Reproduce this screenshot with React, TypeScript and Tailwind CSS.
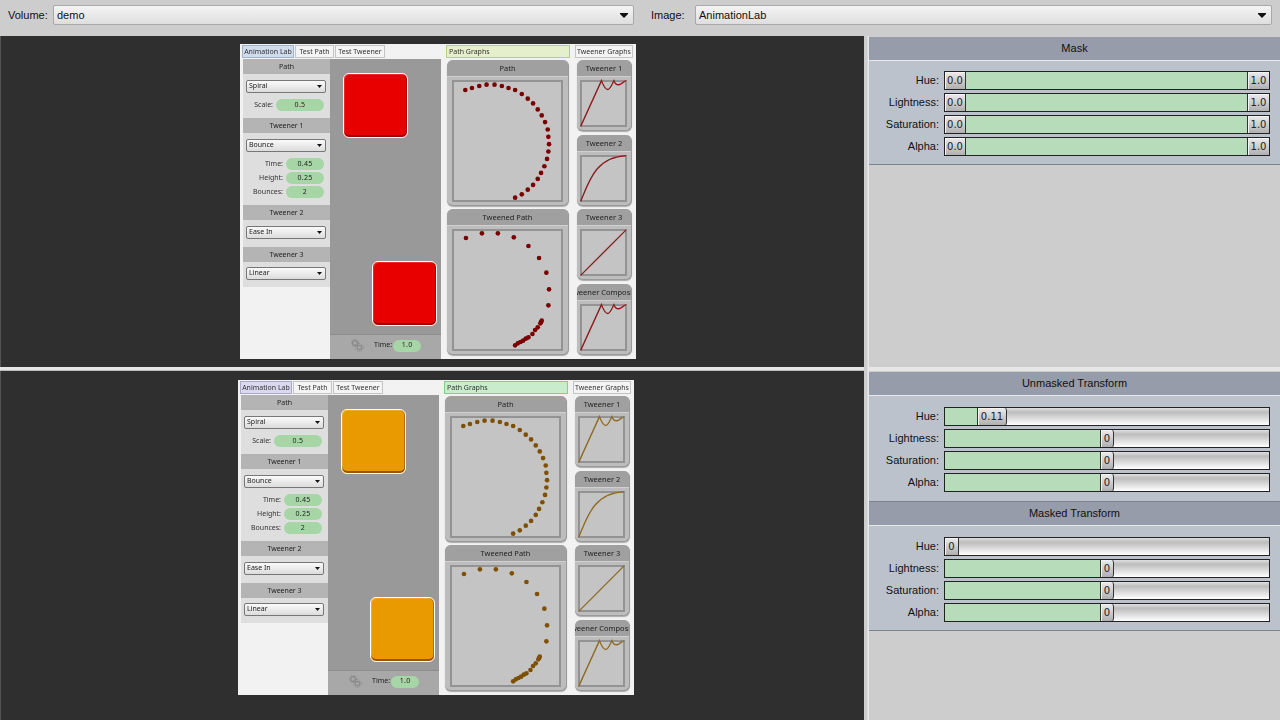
import React from 'react';

const F = 'font-["Liberation_Sans",Arial,sans-serif]';
const N = 'font-["Noto_Sans",Arial,sans-serif]';

const pathDots = [
  [76, 150], [96, 144], [118, 138], [140, 134], [164, 134], [186, 138], [206, 144], [226, 150], [246, 162],
  [264, 176], [280, 190], [294, 208], [306, 226], [316, 246], [324, 268], [326, 290], [328, 312], [326, 334],
  [322, 356], [314, 378], [304, 398], [294, 416], [280, 434], [264, 448], [246, 462], [226, 472],
];

const tweenedDots = [
  [78, 102], [126, 88], [174, 88], [222, 100], [266, 126], [298, 162], [320, 206], [328, 256], [326, 304],
  [306, 350], [304, 354], [302, 358], [294, 370], [286, 378], [278, 390], [266, 400], [258, 404], [250, 410],
  [242, 414], [234, 418], [226, 424],
];

const bounce = 'M424 258 L486 124 C492 140 498 150 505 150 C512 150 518 134 523 124 C527 134 532 137 538 136 C546 135 552 126 560 124';

const Arrow = () => (
  <svg width="8" height="5" viewBox="0 0 8 5" className="shrink-0">
    <path d="M0 0H8V1L4 5L0 1Z" fill="#111" />
  </svg>
);

const Select = ({ label }: { label: string }) => (
  <div className="flex-1 h-5 flex items-center justify-between pl-[3px] pr-[5px] border border-[#a8a8a8] rounded-[2px] bg-gradient-to-b from-[#f4f4f4] to-[#dedede] text-[11px] text-[#111]">
    <span>{label}</span>
    <Arrow />
  </div>
);

const Tab = ({ label, w, tint, left }: { label: string; w: string; tint?: string; left?: boolean }) => (
  <div className={`${w} ${tint ?? 'bg-[#f4f4f4] border-[#c4c4c4]'} ${left ? 'justify-start pl-[2px]' : 'justify-center'} h-[13px] mt-[1px] mr-[1px] pt-[1px] border flex items-center text-[7px] text-[#333] whitespace-nowrap`}>
    {label}
  </div>
);

const SideHead = ({ label }: { label: string }) => (
  <div className="h-[15px] pt-[2px] bg-[#b4b4b4] flex items-center justify-center text-[7px] text-[#222]">{label}</div>
);

const MiniSelect = ({ label }: { label: string }) => (
  <div className="ml-[3px] mr-[4px] h-[13px] flex items-center justify-between px-[2px] border border-[#777] rounded-[2px] bg-gradient-to-b from-[#fafafa] to-[#dcdcdc] text-[7px] text-[#222]">
    <span>{label}</span>
    <svg width="5" height="3" viewBox="0 0 5 3" className="mr-[1px]"><path d="M0 0H5L2.5 3Z" fill="#111" /></svg>
  </div>
);

const Param = ({ label, value, w }: { label: string; value: string; w: string }) => (
  <div className="h-[14px] flex items-center justify-end pr-[6px] gap-[3px] text-[7px] text-[#333]">
    <span>{label}</span>
    <div className={`${w} h-[12px] rounded-full bg-[#a6d6a6] flex items-center justify-center text-[#222] tracking-[0.3px]`}>{value}</div>
  </div>
);

const Square = ({ color, className }: { color: string; className: string }) => (
  <div className={`${className} ${color} w-[65px] h-[65px] rounded-[6px] border border-white shadow-[inset_0_-2px_0_rgba(60,0,0,0.45),inset_-1px_0_0_rgba(60,0,0,0.3),inset_1px_1px_0_rgba(255,255,255,0.15)]`} />
);

const Gears = () => (
  <svg width="13" height="13" viewBox="0 0 13 13" fill="none" stroke="#8a8a8a">
    <circle cx="4" cy="4" r="2.4" strokeWidth="1.2" />
    <circle cx="4" cy="4" r="3.6" strokeWidth="1" strokeDasharray="1.2 1.2" />
    <circle cx="8.5" cy="8.5" r="2.2" fill="#a8a8a8" strokeWidth="1.2" />
    <circle cx="8.5" cy="8.5" r="3.8" strokeWidth="1" strokeDasharray="1.2 1.2" />
  </svg>
);

const Panel = ({ title, big, children }: { title: string; big?: boolean; children: React.ReactNode }) => (
  <div className={`${big ? 'w-[122px] h-[146px]' : 'w-[55px] h-[71px]'} shrink-0 flex flex-col rounded-[6px] overflow-hidden bg-[#bdbdbd] border-r border-b border-[#9a9a9a] shadow-[0_1px_1px_#aaa]`}>
    <div className="h-[17px] pt-[1px] shrink-0 bg-[#a0a0a0] border-b border-[#d0d0d0] flex justify-center items-center overflow-hidden text-[7.5px] text-[#222] whitespace-nowrap">
      {title}
    </div>
    <div className={`${big ? 'w-[111px] h-[122px] ml-[5px]' : 'w-[47px] h-[47px] ml-[3px]'} mt-[3px] border-2 border-[#939393] bg-[#c4c4c4]`}>
      {children}
    </div>
  </div>
);

const Dots = ({ dots, box, color }: { dots: number[][]; box: string; color: string }) => (
  <svg width="107" height="118" viewBox={box} preserveAspectRatio="none" className="block">
    {dots.map(([x, y], i) => (
      <circle key={i} cx={x} cy={y} r="7" fill={color} />
    ))}
  </svg>
);

const Curve = ({ d, dy, color }: { d: string; dy: number; color: string }) => (
  <svg width="43" height="43" viewBox={`428 ${128 + dy} 128 126`} preserveAspectRatio="none" className="block overflow-visible">
    <path d={d} fill="none" stroke={color} strokeWidth="4" />
  </svg>
);

const LabWindow = ({ square, dot, line, firstTab, graphTab, className }: {
  square: string; dot: string; line: string; firstTab: string; graphTab: string; className: string;
}) => (
  <div className={`${className} ${N} w-[396px] h-[315px] bg-[#f2f2f2] flex flex-col blur-[0.3px]`}>
    <div className="h-[15px] shrink-0 flex pl-[2px]">
      <Tab label="Animation Lab" w="w-[52px]" tint={firstTab} />
      <Tab label="Test Path" w="w-[39px]" />
      <Tab label="Test Tweener" w="w-[50px]" />
      <div className="w-[60px]" />
      <Tab label="Path Graphs" w="w-[124px]" tint={graphTab} left />
      <div className="w-[4px]" />
      <Tab label="Tweener Graphs" w="w-[58px]" />
    </div>
    <div className="flex-1 flex min-h-0">
      <div className="w-[87px] ml-[3px] shrink-0 flex flex-col">
        <div className="bg-[#dedede] h-[59px]">
          <SideHead label="Path" />
          <div className="pt-[6px]"><MiniSelect label="Spiral" /></div>
          <div className="mt-[5px]"><Param label="Scale:" value="0.5" w="w-[48px]" /></div>
        </div>
        <div className="bg-[#dedede] h-[87px]">
          <SideHead label="Tweener 1" />
          <div className="pt-[6px]"><MiniSelect label="Bounce" /></div>
          <div className="mt-[5px]">
            <Param label="Time:" value="0.45" w="w-[38px]" />
            <Param label="Height:" value="0.25" w="w-[38px]" />
            <Param label="Bounces:" value="2" w="w-[38px]" />
          </div>
        </div>
        <div className="bg-[#dedede] h-[42px]">
          <SideHead label="Tweener 2" />
          <div className="pt-[6px]"><MiniSelect label="Ease In" /></div>
        </div>
        <div className="bg-[#dedede] h-[40px]">
          <SideHead label="Tweener 3" />
          <div className="pt-[5px]"><MiniSelect label="Linear" /></div>
        </div>
      </div>
      <div className="w-[111px] shrink-0 flex flex-col">
        <div className="flex-1 bg-[#999999] flex flex-col">
          <Square color={square} className="ml-[13px] mt-[14px]" />
          <Square color={square} className="ml-[42px] mt-[123px]" />
        </div>
        <div className="h-[25px] bg-[#a8a8a8] border-t border-[#8c8c8c] flex items-center text-[7px] text-[#222] pl-[21px] pb-[3px]">
          <Gears />
          <span className="ml-[10px]">Time:</span>
          <div className="ml-[1px] w-[28px] h-[12px] rounded-full bg-[#a6d6a6] flex items-center justify-center tracking-[0.3px]">1.0</div>
        </div>
      </div>
      <div className="flex pl-[6px] pt-[1px] gap-[8px]">
        <div className="flex flex-col gap-[3px]">
          <Panel title="Path" big><Dots dots={pathDots} box="42 126 322 353" color={dot} /></Panel>
          <Panel title="Tweened Path" big><Dots dots={tweenedDots} box="42 81 322 354" color={dot} /></Panel>
        </div>
        <div className="flex flex-col">
          <Panel title="Tweener 1"><Curve d={bounce} dy={0} color={line} /></Panel>
          <div className="h-[4px]" />
          <Panel title="Tweener 2"><Curve d="M424 482 C450 420 470 352 560 348" dy={224} color={line} /></Panel>
          <div className="h-[3px]" />
          <Panel title="Tweener 3"><Curve d="M424 258 L560 124" dy={0} color={line} /></Panel>
          <div className="h-[4px]" />
          <Panel title="Tweener Composite"><Curve d={bounce} dy={0} color={line} /></Panel>
        </div>
      </div>
    </div>
  </div>
);

// sliding thumb: edge says which side carries the dark line
const Thumb = ({ value, w, edge }: { value: string; w: string; edge: 'start' | 'end' | 'slide' }) => {
  const cls = edge === 'start' ? 'border-r' : edge === 'end' ? 'border-l' : 'border-l border-r rounded-r-[3px]';
  return (
    <div className={`${w} ${cls} shrink-0 h-full flex items-center justify-center bg-gradient-to-b from-[#ececec] to-[#b0b0b0] border-[#333] shadow-[inset_1px_1px_0_#f4f4f4] font-["DejaVu_Sans",sans-serif] text-[10px] text-[#222]`}>
      {value}
    </div>
  );
};

const Track = () => <div className="flex-1 h-full bg-gradient-to-b from-[#e0e0e0] via-[#bcbcbc] via-25% to-white" />;

const Fill = ({ w }: { w: string }) => <div className={`${w} h-full bg-[#b7dcb9]`} />;

const SliderRow = ({ label, children }: { label: string; children: React.ReactNode }) => (
  <div className="flex items-center h-[19px] gap-[5px]">
    <div className="w-[70px] text-right text-[#111]">{label}</div>
    <div className="flex-1 h-[19px] flex border border-[#222] overflow-hidden">{children}</div>
  </div>
);

const GroupHead = ({ title }: { title: string }) => (
  <div className="h-[24px] bg-[#969ca9] border-b border-[#e8e8e8] flex items-center justify-center text-[#111]">{title}</div>
);

const Group = ({ pt, pb, children }: { pt: string; pb: string; children: React.ReactNode }) => (
  <div className={`${pt} ${pb} bg-[#bcc2cc] border-b border-[#7c8490] pr-[10px] flex flex-col gap-[3px]`}>{children}</div>
);

const restRows = ['Lightness:', 'Saturation:', 'Alpha:'];

export default function App() {
  return (
    <div className={`${F} w-[1280px] h-[720px] overflow-hidden bg-[#cdcdcd] flex flex-col text-[11px]`}>
      <div className="h-[36px] shrink-0 flex items-start pt-[5px]">
        <div className="w-[53px] pl-[8px] leading-5 text-[#111]">Volume:</div>
        <div className="w-[581px] flex"><Select label="demo" /></div>
        <div className="w-[61px] pl-[17px] leading-5 text-[#111]">Image:</div>
        <div className="w-[577px] flex"><Select label="AnimationLab" /></div>
      </div>
      <div className="flex-1 flex min-h-0">
        <div className="w-[864px] shrink-0 flex flex-col">
          <div className="h-[331px] bg-[#2f2f2f] border-l border-[#555] pt-[8px]">
            <LabWindow className="ml-[239px]" square="bg-[#e80000]" dot="#7a0000" line="#8c1c1c" firstTab="bg-[#cfdcec] border-[#9fb4cc]" graphTab="bg-[#e6efcc] border-[#b4cf80]" />
          </div>
          <div className="h-[4px] bg-[#e6e6e6] border-b border-[#bbb]" />
          <div className="flex-1 bg-[#2f2f2f] border-l border-[#555] pt-[9px]">
            <LabWindow className="ml-[237px]" square="bg-[#e89a00]" dot="#7f4f00" line="#8f6a20" firstTab="bg-[#d8d8ee] border-[#a8a8cc]" graphTab="bg-[#c8eccc] border-[#7fd08f]" />
          </div>
        </div>
        <div className="w-[416px] shrink-0 flex">
          <div className="w-[5px] bg-gradient-to-r from-[#cdcdcd] via-[#cdcdcd] to-[#efefef]" />
          <div className="flex-1 flex flex-col">
            <div className="h-[331px] pt-[1px]">
              <GroupHead title="Mask" />
              <Group pt="pt-[10px]" pb="pb-[8px]">
                {['Hue:', ...restRows].map((l) => (
                  <SliderRow key={l} label={l}>
                    <Thumb value="0.0" w="w-[21px]" edge="start" />
                    <Fill w="flex-1" />
                    <Thumb value="1.0" w="w-[22px]" edge="end" />
                  </SliderRow>
                ))}
              </Group>
            </div>
            <div className="h-[4px] bg-[#e6e6e6]" />
            <div className="pt-[1px]">
              <GroupHead title="Unmasked Transform" />
              <Group pt="pt-[11px]" pb="pb-[9px]">
                <SliderRow label="Hue:"><Fill w="w-[32px]" /><Thumb value="0.11" w="w-[30px]" edge="slide" /><Track /></SliderRow>
                {restRows.map((l) => (
                  <SliderRow key={l} label={l}><Fill w="w-[155px]" /><Thumb value="0" w="w-[14px]" edge="slide" /><Track /></SliderRow>
                ))}
              </Group>
              <GroupHead title="Masked Transform" />
              <Group pt="pt-[11px]" pb="pb-[8px]">
                <SliderRow label="Hue:"><Thumb value="0" w="w-[14px]" edge="start" /><Track /></SliderRow>
                {restRows.map((l) => (
                  <SliderRow key={l} label={l}><Fill w="w-[155px]" /><Thumb value="0" w="w-[14px]" edge="slide" /><Track /></SliderRow>
                ))}
              </Group>
            </div>
          </div>
        </div>
      </div>
    </div>
  );
}
